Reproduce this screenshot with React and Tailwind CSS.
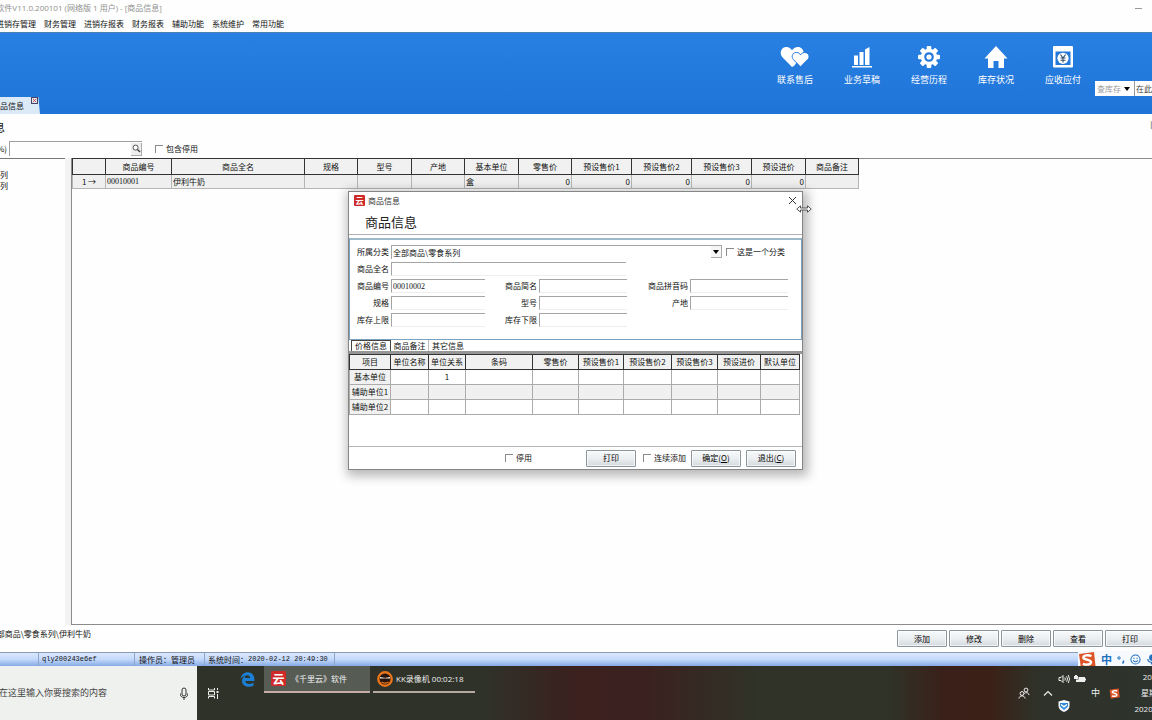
import React from "react";

const mono = "font-['Liberation_Mono','Noto_Sans_CJK_SC',monospace]";
const serif = "font-['Liberation_Serif','Noto_Sans_CJK_SC',serif]";
const sans = "font-['Open_Sans','Noto_Sans_CJK_SC',sans-serif]";

const menus = ["进销存管理", "财务管理", "进销存报表", "财务报表", "辅助功能", "系统维护", "常用功能"];

const columns = [
  ["", "w-[33px]"],
  ["商品编号", "w-[66px]"],
  ["商品全名", "w-[133px]"],
  ["规格", "w-[53px]"],
  ["型号", "w-[54px]"],
  ["产地", "w-[53px]"],
  ["基本单位", "w-[54px]"],
  ["零售价", "w-[53px]"],
  ["预设售价1", "w-[60px]"],
  ["预设售价2", "w-[60px]"],
  ["预设售价3", "w-[60px]"],
  ["预设进价", "w-[54px]"],
  ["商品备注", "w-[53px]"],
];
const product = ["1 →", "00010001", "伊利牛奶", "", "", "", "盒", "0", "0", "0", "0", "0", ""];

const unitColumns = [
  ["项目", "w-[41px]"],
  ["单位名称", "w-[38px]"],
  ["单位关系", "w-[37px]"],
  ["条码", "w-[67px]"],
  ["零售价", "w-[46px]"],
  ["预设售价1", "w-[45px]"],
  ["预设售价2", "w-[48px]"],
  ["预设售价3", "w-[46px]"],
  ["预设进价", "w-[43px]"],
  ["默认单位", "w-[39px]"],
];
const units = ["基本单位", "辅助单位1", "辅助单位2"];

function HeartsIcon() {
  return (
    <svg viewBox="0 0 30 22" className="h-[22px] w-[30px]">
      <path d="M12 21 2.6 11.4C-.6 7.8.4 2.6 4.6 1.2 7.7.2 10.500 1.600 12 4.200 13.600 1.600 16.600.2 19.800 1.200 22.400 2.200 23.800 4.600 23.600 7.200L14 20Z" fill="#fff" />
      <path d="M20.500 20.800 13.400 13.600C11.200 11 12.200 7.400 15.200 6.600 17.500 6 19.500 7 20.500 8.900 21.600 7 23.700 6 26 6.700 29.200 7.700 30 11.200 27.700 13.600Z" fill="#fff" stroke="#2478da" strokeWidth="1" />
    </svg>
  );
}
function BarsIcon() {
  return (
    <svg viewBox="0 0 22 22" className="h-[22px] w-[22px]" fill="#fff">
      <path d="M3 9.500h4V19H3zM8.500 6h4v13h-4zM14 3.500 18.500 1v18H14zM1 20h20v1.400H1z" />
    </svg>
  );
}
function GearIcon() {
  return (
    <svg viewBox="0 0 22 22" className="h-[22px] w-[22px]">
      <g fill="#fff">
        {[0, 45, 90, 135].map((a) => (
          <rect key={a} x="8.700" y="0" width="4.600" height="22" rx="1" transform={`rotate(${a} 11 11)`} />
        ))}
        <circle cx="11" cy="11" r="8.200" />
      </g>
      <circle cx="11" cy="11" r="4.800" fill="#2478da" />
      <circle cx="11" cy="11" r="2.600" fill="#fff" />
    </svg>
  );
}
function HouseIcon() {
  return (
    <svg viewBox="0 0 24 22" className="h-[22px] w-6" fill="#fff">
      <path d="M12 0 23.500 12.500H20V22H14.500V15H9.500V22H4V12.500H.5Z" />
    </svg>
  );
}
function YenIcon() {
  return (
    <svg viewBox="0 0 20 22" className="h-[22px] w-5">
      <rect width="20" height="21.500" rx="1" fill="#fff" />
      <rect x="2.500" y="5.500" width="15" height="13.500" fill="#2478da" />
      <circle cx="10" cy="12.300" r="5.600" fill="#fff" />
      <path d="M7.500 8.500 10 12l2.500-3.500M10 12v4.500M7.500 12h5M7.500 14.300h5" stroke="#35506e" strokeWidth="1.100" fill="none" />
    </svg>
  );
}

const shortcuts = [
  ["联系售后", HeartsIcon],
  ["业务草稿", BarsIcon],
  ["经营历程", GearIcon],
  ["库存状况", HouseIcon],
  ["应收应付", YenIcon],
];

function Check({ label, className = "" }) {
  return (
    <label className={`flex items-center gap-[3px] whitespace-nowrap ${className}`}>
      <input type="checkbox" className="h-2 w-2 appearance-none border-l border-t border-[#8a8a8a] bg-white checked:bg-[#555]" />
      {label}
    </label>
  );
}

function PushButton({ children }) {
  return (
    <button className="h-[17px] w-[50px] shrink-0 rounded-[1px] border border-[#8d959c] bg-linear-to-b from-[#f7f9fa] via-[#eceff1] to-[#d3d9de] text-[8px] leading-none text-black shadow-[inset_0_0_0_1px_#ffffffaa]">
      {children}
    </button>
  );
}

function Field({ id, label, value = "" }) {
  return (
    <>
      <label htmlFor={id} className="pr-[2px] text-right">{label}</label>
      <input
        id={id}
        defaultValue={value}
        className={`h-[14px] w-full min-w-0 border-b border-l border-t border-b-[#eeeeee] border-l-[#a5a5a5] border-t-[#a5a5a5] bg-transparent px-px text-[8px] leading-none outline-none ${serif}`}
      />
    </>
  );
}

function CloudLogo({ className }) {
  return (
    <span className={`flex items-center justify-center rounded-[1px] bg-[#cf2a2a] font-bold leading-none text-white ${className}`}>
      云
    </span>
  );
}

function SogouIcon({ className }) {
  return (
    <svg viewBox="0 0 18 18" className={className}>
      <path d="M1 3 16 1l1.500 14L3 17.500Z" fill="#dd5426" />
      <path d="M13.500 5C10 3.600 5.500 4.200 5.300 6.500 5.200 9 13 8.300 13 11.200 13 13.900 8 14.200 4.800 12.800" stroke="#fff" strokeWidth="2.400" fill="none" />
    </svg>
  );
}

function ProductDialog() {
  return (
    <section
      role="dialog"
      aria-label="商品信息"
      className="absolute left-[348px] top-[191px] flex h-[279px] w-[455px] flex-col border border-[#858585] bg-white shadow-[2px_3px_10px_3px_rgba(0,0,0,0.28)]"
    >
      <header className="flex h-[43px] shrink-0 flex-col border-b border-[#b0b0b0]">
        <div className="flex h-5 items-center pl-[5px] pr-[5px] text-[#333]">
          <CloudLogo className="h-[11px] w-[11px] text-[8px]" />
          <span className="ml-[3px]">商品信息</span>
          <button aria-label="关闭" className="ml-auto">
            <svg viewBox="0 0 9 9" className="h-[9px] w-[9px]" stroke="#333" fill="none">
              <path d="M1 1l7 7M8 1 1 8" />
            </svg>
          </button>
        </div>
        <h2 className="pl-4 pt-px text-[13px] leading-6 text-[#222]">商品信息</h2>
      </header>

      <form className="mt-[3px] flex h-[102px] shrink-0 flex-col gap-[3px] border border-t-2 border-[#7ba3c0] border-t-[#9db9ca] pt-[5px]">
        <div className="flex items-center">
          <label htmlFor="category" className="w-[41px] pr-[2px] text-right">所属分类</label>
          <div className="relative w-[331px]">
            <select id="category" className="block h-[14px] w-full appearance-none border-l border-t border-[#a5a5a5] px-px text-[8px] leading-none outline-none">
              <option>全部商品\零食系列</option>
            </select>
            <span className="pointer-events-none absolute right-0 top-px flex h-3 w-[11px] items-center justify-center border-b border-r border-[#aaa] bg-[#f5f5f5]">
              <svg viewBox="0 0 6 4" className="h-1 w-[6px]"><path d="M0 0h6L3 4Z" /></svg>
            </span>
          </div>
          <Check label="这是一个分类" className="ml-1" />
        </div>
        <div className="grid grid-cols-[41px_235px] items-center">
          <Field id="full-name" label="商品全名" />
        </div>
        <div className="grid grid-cols-[41px_94px_54px_88px_63px_98px] items-center gap-y-[3px]">
          <Field id="code" label="商品编号" value="00010002" />
          <Field id="short-name" label="商品简名" />
          <Field id="pinyin" label="商品拼音码" />
          <Field id="spec" label="规格" />
          <Field id="model" label="型号" />
          <Field id="origin" label="产地" />
          <Field id="upper" label="库存上限" />
          <Field id="lower" label="库存下限" />
        </div>
      </form>

      <div role="tablist" className="flex h-[14px] shrink-0 items-end border-b-[3px] border-[#969696] pl-[2px]">
        <button role="tab" aria-selected="true" className="h-[11px] w-10 border border-b-0 border-[#444] leading-none">价格信息</button>
        <button role="tab" aria-selected="false" className="h-[11px] w-[38px] border-r border-[#bbb] leading-none">商品备注</button>
        <button role="tab" aria-selected="false" className="h-[11px] w-[38px] leading-none">其它信息</button>
      </div>

      <table className="w-[450px] table-fixed border-collapse text-center">
        <thead>
          <tr className="h-[15px] bg-[#f0f1f0]">
            {unitColumns.map(([name, width]) => (
              <th key={name} className={`${width} whitespace-nowrap border border-[#333] p-0 font-normal leading-none`}>{name}</th>
            ))}
          </tr>
        </thead>
        <tbody>
          {units.map((unit, i) => (
            <tr key={unit} className="h-[15px] even:bg-[#f0f0f0]">
              <th className="whitespace-nowrap border border-[#ababab] bg-[#f0f1f0] p-0 font-normal leading-none">{unit}</th>
              {unitColumns.slice(1).map(([name]) => (
                <td key={name} className="border border-[#ababab] p-0 leading-none">
                  {i === 0 && name === "单位关系" ? "1" : ""}
                </td>
              ))}
            </tr>
          ))}
        </tbody>
      </table>

      <footer className="mt-auto flex h-[23px] shrink-0 items-center justify-end border-t border-[#b5b5b5] pr-[6px]">
        <Check label="停用" className="mr-[54px]" />
        <PushButton>打印</PushButton>
        <Check label="连续添加" className="ml-[7px] mr-[5px]" />
        <PushButton>确定(<u>O</u>)</PushButton>
        <span className="w-[5px]" />
        <PushButton>退出(<u>C</u>)</PushButton>
      </footer>

      <svg viewBox="0 0 16 8" className="absolute -right-[10px] top-[13px] h-2 w-4" fill="#fff" stroke="#444" strokeWidth="0.900">
        <path d="M.8 4 4.500.8V3h7V.8L15.200 4 11.500 7.200V5h-7V7.200Z" />
      </svg>
    </section>
  );
}

function Taskbar() {
  return (
    <footer className="flex h-[54px] shrink-0 overflow-hidden bg-[linear-gradient(90deg,#2e332a_0%,#2f3229_42%,#3b201e_50%,#3b211f_56%,#2f3328_66%,#2f3328_77%,#3a2019_82%,#3b2017_86%,#2f3229_90%,#2e332d_100%)] text-[#f0f0f0]">
      <div className="flex w-[197px] shrink-0 items-center bg-[#eff1ef] text-[9px] text-[#444]">
        <div className="flex w-[107px] justify-end overflow-hidden whitespace-nowrap">在这里输入你要搜索的内容</div>
        <svg viewBox="0 0 10 13" className="ml-auto mr-2 h-[13px] w-[10px]" fill="none" stroke="#333">
          <rect x="3" y="1" width="4" height="8" rx="2" />
          <path d="M1.500 6.500v1C1.500 9.500 3 10.500 5 10.500s3.500-1 3.500-3v-1M5 10.500V13" />
        </svg>
      </div>
      <button aria-label="任务视图" className="ml-[10px] w-3 shrink-0">
        <svg viewBox="0 0 12 12" className="h-3 w-3" fill="none" stroke="#eee">
          <path d="M1.500 1v2h6V1M1.500 11.500v-2h6v2M1.500 4.500h6v3.500h-6ZM10.500 1v2M10.500 7v5" />
          <path d="M9.500 5h2" strokeWidth="2" />
        </svg>
      </button>
      <button aria-label="浏览器" className="ml-[21px] mt-[6px] h-[15px] w-[15px] shrink-0">
        <svg viewBox="0 0 24 24" className="h-[15px] w-[15px]">
          <path fill="#1b7fd6" d="M1 10.600C2 4.500 6.500.5 12.300.5 18.500.5 23 5 23 11.500v2.800H8.300c.2 3.300 3 4.900 6.300 4.900 2.500 0 4.800-.6 7-1.900v4.500c-2.300 1.200-5 1.700-7.800 1.700-6.600 0-10.500-3.900-10.500-9.200 0-4 2.200-7.200 5.800-8.800-1 1.300-1.300 2.600-1.300 4.100h8.300c0-2.900-1.500-4.600-4.400-4.600C7.300 5 3.500 7.300 1 10.600Z" />
        </svg>
      </button>
      <button className="ml-[9px] flex h-[27px] w-[106px] shrink-0 items-center gap-[5px] whitespace-nowrap border-b-2 border-[#c4ada5] bg-[#565c54] pl-[7px] text-[8px]">
        <CloudLogo className="h-[15px] w-[15px] text-[12px]" />
        《千里云》软件
      </button>
      <button className={`ml-[3px] flex h-[27px] w-[102px] shrink-0 items-center gap-[3px] whitespace-nowrap border-b-2 border-[#b5aaa2] pl-1 text-[8px] ${sans}`}>
        <svg viewBox="0 0 16 16" className="h-4 w-4 shrink-0">
          <circle cx="8" cy="8" r="6.700" fill="#25150c" stroke="#e8751c" strokeWidth="2.400" />
          <path d="M3 6 7 6.800h2L13 6v1.500H9.300L8 7.200 6.700 7.500H3Z" fill="#f6ede4" />
          <path d="M4.500 11q3.500 2.200 7 0" stroke="#e8751c" strokeWidth="1.300" fill="none" />
        </svg>
        KK录像机 00:02:18
      </button>
      <div className="ml-auto flex shrink-0 items-center">
        <svg viewBox="0 0 12 12" className="h-3 w-3" fill="none" stroke="#eee">
          <circle cx="8" cy="3" r="1.900" /><path d="M5.500 7.500C6 5.500 10.500 4.500 11 8" />
          <circle cx="4" cy="6.500" r="1.900" /><path d="M1 11.500C1 8 7 8 7 11.500" />
        </svg>
        <svg viewBox="0 0 10 6" className="ml-[13px] h-[6px] w-[10px]" fill="none" stroke="#eee" strokeWidth="1.200"><path d="m1 5.500 4-4 4 4" /></svg>
        <div className="ml-[5px] flex w-[30px] flex-col gap-4">
          <div className="flex items-center gap-1">
            <svg viewBox="0 0 12 10" className="h-[10px] w-3" fill="none" stroke="#eee"><path d="M1 3.500h2L5 1.500v7l-2-2H1ZM6.800 3.500q1 1.500 0 3M8.600 2.300q1.800 2.700 0 5.400M10.300 1q2.400 4 0 8" /></svg>
            <svg viewBox="0 0 12 8" className="h-2 w-3" fill="#eee"><path d="M1 0h2v1h1v3H0V1h1ZM4.500 2H11v5H2V4.500h2.500Z" /><path d="M11 3.500h1v2h-1z" /></svg>
          </div>
          <svg viewBox="0 0 12 12" className="h-3 w-3"><path d="M6 0 11.500 1.500V6C11.500 9 9 11 6 12 3 11 .5 9 .5 6V1.500Z" fill="#f2f8ff" /><path d="M2 3h8v3.500L6 10 2 6.500Z" fill="#2f86d9" /><path d="m3 4.500 3 2.300 3-2.300" stroke="#fff" strokeWidth="1.400" fill="none" /></svg>
        </div>
        <span className="ml-[3px] text-[9px]">中</span>
        <SogouIcon className="ml-[9px] h-[11px] w-[11px]" />
        <div className="ml-3 w-5 overflow-hidden">
          <div className={`w-[42px] text-center text-[8px] leading-4 ${sans}`}>
            <div>20:49</div>
            <div>星期三</div>
            <div>2020-2-12</div>
          </div>
        </div>
      </div>
    </footer>
  );
}

export default function App() {
  return (
    <div className="relative flex min-h-screen flex-col overflow-hidden bg-[#fdfefd] font-['Noto_Sans_CJK_SC',sans-serif] text-[8px] leading-3 text-[#111]">
      <header className="flex h-4 shrink-0 items-center justify-between">
        <div className={`flex w-[162px] justify-end overflow-hidden whitespace-nowrap text-[#909090] ${sans}`}>
          千里云软件V11.0.200101 (网络版 1 用户) - [商品信息]
        </div>
        <button aria-label="最小化" className="mr-[10px] h-px w-[7px] bg-[#999]" />
      </header>
      <nav className="-ml-1 flex h-4 shrink-0 items-center gap-2">
        {menus.map((m) => (
          <button key={m} className="whitespace-nowrap">{m}</button>
        ))}
      </nav>

      <div className="flex h-[82px] shrink-0 items-start justify-between border-t border-[#4a7fb8] bg-linear-to-b from-[#2880e2] to-[#1f74d8]">
        <div className="flex items-start self-end">
          <div className="flex h-[17px] w-10 items-center overflow-hidden bg-[#dce9f6] [clip-path:polygon(0_0,96%_0,100%_100%,0_100%)]">
            <div className="flex w-6 justify-end whitespace-nowrap">商品信息</div>
            <button aria-label="关闭标签" className="ml-[7px] h-[7px] w-[7px] self-start border border-[#446]">
              <svg viewBox="0 0 6 6" className="h-full w-full" stroke="#c33" fill="#fff"><path d="M1 1l4 4M5 1 1 5" /></svg>
            </button>
          </div>
        </div>
        <div className="flex">
          <nav className="flex gap-[29px] pt-[13px]">
            {shortcuts.map(([name, Icon]) => (
              <button key={name} className="flex w-[38px] flex-col items-center gap-1 whitespace-nowrap text-[9px] leading-4 text-white">
                <Icon />
                <span>{name}</span>
              </button>
            ))}
          </nav>
          <div className="ml-[13px] mt-[48px] flex h-[15px] w-[57px] overflow-hidden bg-white">
            <div className="relative w-10 shrink-0 border-r border-[#999]">
              <select aria-label="查询类型" className="block h-[15px] w-full appearance-none pl-[2px] text-[8px] leading-none text-[#999] outline-none">
                <option>查库存</option>
              </select>
              <svg viewBox="0 0 6 4" className="pointer-events-none absolute right-1 top-[6px] h-1 w-[6px]"><path d="M0 0h6L3 4Z" /></svg>
            </div>
            <input aria-label="查询内容" placeholder="在此输入" className="w-10 shrink-0 pl-px text-[8px] leading-none outline-none placeholder:text-[#444]" />
          </div>
        </div>
      </div>

      <div className="flex h-[26px] shrink-0 items-center justify-between">
        <h1 className="flex w-[5px] justify-end overflow-hidden whitespace-nowrap text-[11px] font-normal leading-4">商品信息</h1>
        <span className="mb-1 w-[2px] overflow-hidden text-[#555]">阝</span>
      </div>
      <div className="flex h-[18px] shrink-0 items-start">
        <label htmlFor="search" className="flex h-[17px] w-[7px] items-center justify-end overflow-hidden whitespace-nowrap">查找(%)</label>
        <div className="ml-[2px] mt-px flex h-[15px] w-[133px] items-center border-l border-t border-[#a0a0a0]">
          <input id="search" className="h-full min-w-0 flex-1 bg-transparent px-1 text-[8px] outline-none" />
          <button aria-label="搜索" className="flex h-[13px] w-[11px] items-center justify-center border-b border-r border-[#aaa] bg-[#eee]">
            <svg viewBox="0 0 10 10" className="h-[9px] w-[9px]" fill="#fff" stroke="#444"><circle cx="4" cy="4" r="2.800" /><path d="m6 6 3 3" strokeWidth="1.600" /></svg>
          </button>
        </div>
        <Check label="包含停用" className="ml-[13px] h-[17px]" />
      </div>

      <main className="flex min-h-0 flex-1">
        <aside className="w-[65px] shrink-0 border-t border-[#777]">
          <ul className="flex w-2 flex-col items-end overflow-hidden whitespace-nowrap pt-[10px] leading-[11px]">
            <li>零食系列</li>
            <li>饮料系列</li>
          </ul>
        </aside>
        <div className="w-[6px] shrink-0 bg-[#f2f3f2]" />
        <section className="min-w-0 flex-1 border-b border-l border-t border-[#8c8c8c]">
          <table className="-mt-px w-[787px] table-fixed border-collapse">
            <thead>
              <tr className="h-4 bg-[#f0f1f0]">
                {columns.map(([name, width]) => (
                  <th key={name} className={`${width} border border-[#333] p-0 font-normal leading-none`}>{name}</th>
                ))}
              </tr>
            </thead>
            <tbody>
              <tr className="h-[14px] bg-[#eeefee]">
                {product.map((v, i) => (
                  <td
                    key={i}
                    className={`border border-[#b5b5b5] px-px py-0 leading-none ${i === 0 ? "text-center" : i > 6 ? "text-right" : ""} ${i === 1 ? serif : ""}`}
                  >
                    {v}
                  </td>
                ))}
              </tr>
            </tbody>
          </table>
        </section>
      </main>

      <div className="flex h-[27px] shrink-0 items-center justify-between overflow-hidden">
        <div className="mb-[10px] flex w-[91px] justify-end overflow-hidden whitespace-nowrap">全部商品\零食系列\伊利牛奶</div>
        <div className="-mr-[3px] flex gap-[2px]">
          {["添加", "修改", "删除", "查看", "打印"].map((b) => (
            <PushButton key={b}>{b}</PushButton>
          ))}
        </div>
      </div>

      <div className="flex h-[14px] shrink-0 items-center border-t border-[#8a9ab0] bg-linear-to-b from-[#dbe8fd] via-[#c3d8fa] to-[#86aae6] leading-[13px]">
        <div className="h-full w-[39px] border-r border-[#8fa6c8]" />
        <div className={`h-full w-[96px] border-r border-[#8fa6c8] pl-[3px] text-[7px] ${mono}`}>qly200243e6ef</div>
        <div className="h-full w-[70px] border-r border-[#8fa6c8] pl-1">操作员：管理员</div>
        <div className="flex h-full w-[130px] border-r border-[#8fa6c8] pl-[3px]">
          系统时间：<span className={`whitespace-nowrap text-[7px] ${mono}`}>2020-02-12 20:49:30</span>
        </div>
        <div className="ml-auto flex h-[18px] w-[74px] shrink-0 items-center gap-[5px] overflow-hidden bg-[#f6faff] text-[#2270bd]">
          <SogouIcon className="h-[18px] w-[18px] shrink-0" />
          <span className="text-[11px] font-bold">中</span>
          <svg viewBox="0 0 8 8" className="h-2 w-2 shrink-0" fill="none" stroke="#2270bd"><circle cx="2" cy="2" r="1.200" /><path d="M6.500 4.500v1.500l-1 1.500" strokeWidth="1.500" /></svg>
          <svg viewBox="0 0 12 12" className="h-[11px] w-[11px] shrink-0" fill="none" stroke="#2270bd" strokeWidth="1.100"><circle cx="6" cy="6" r="5" /><path d="M3.500 7q2.500 3 5 0M4.300 4v1.500M7.700 4v1.500" /></svg>
          <svg viewBox="0 0 12 12" className="h-[11px] w-[11px] shrink-0" fill="none" stroke="#2270bd"><rect x="4" y="1" width="4" height="6" rx="2" fill="#2270bd" /><path d="M2 5.500q0 3.500 4 3.500t4-3.500M6 9v2.500" strokeWidth="1.300" /></svg>
        </div>
      </div>

      <Taskbar />
      <ProductDialog />
    </div>
  );
}
